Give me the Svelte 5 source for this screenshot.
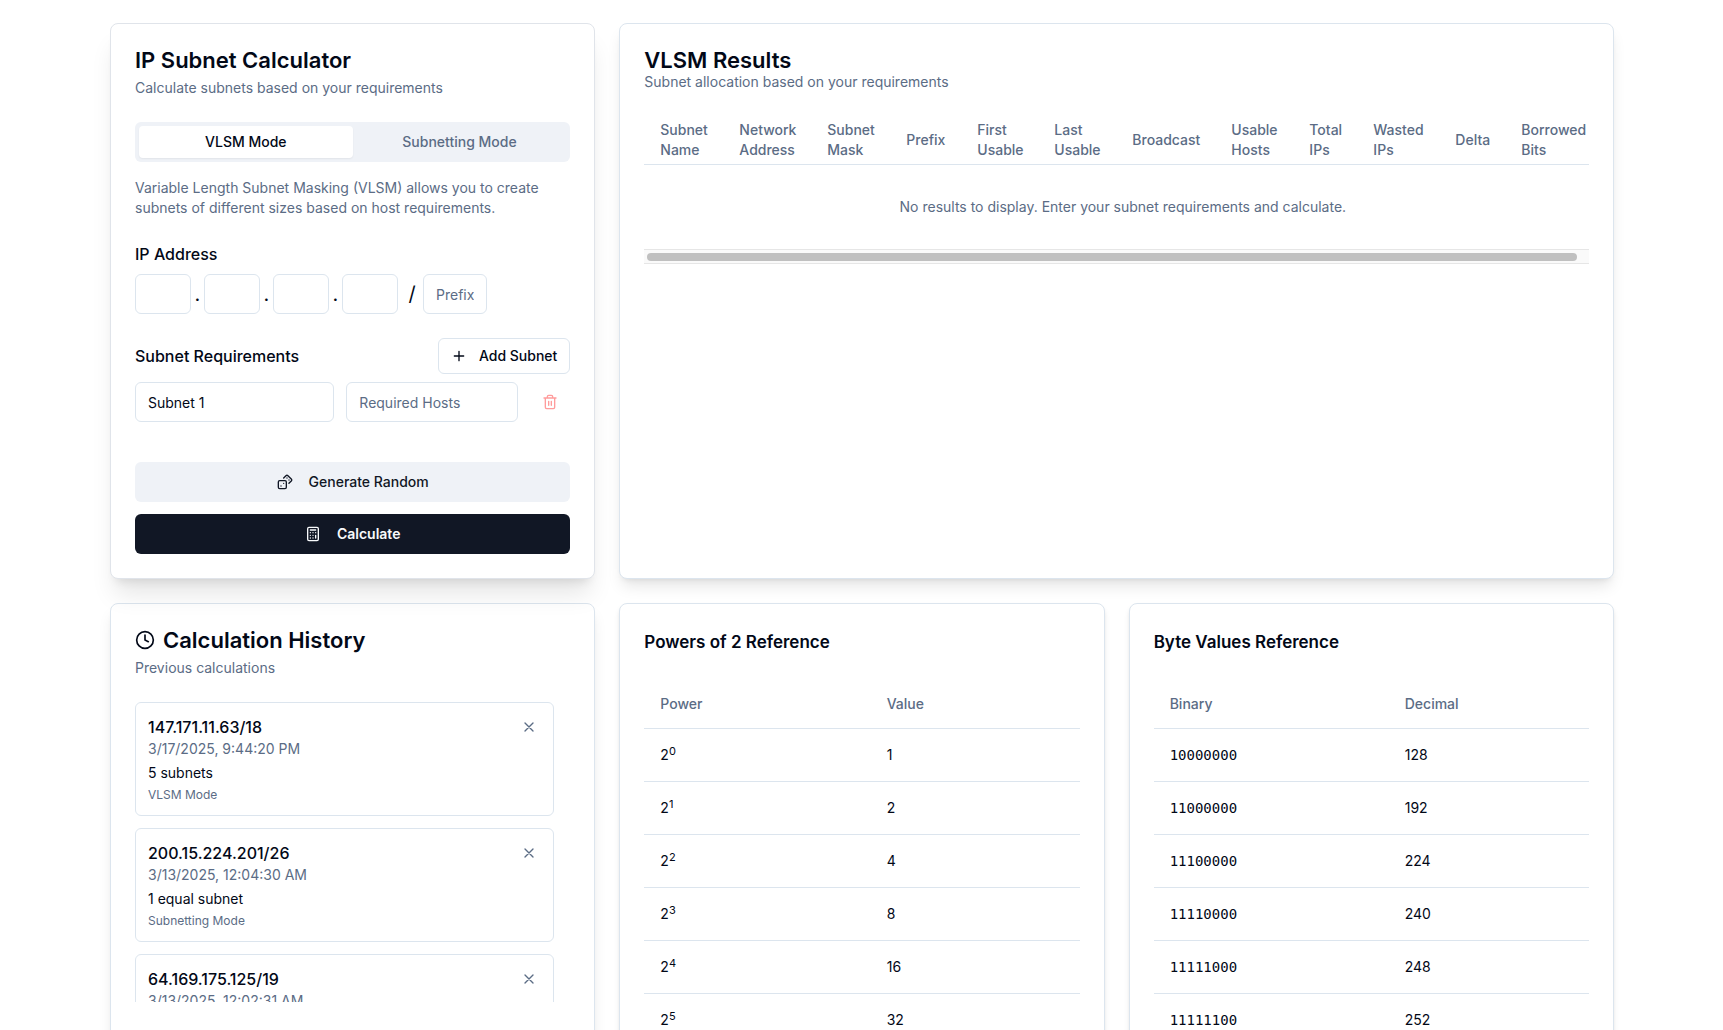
<script>
  let mode = $state('vlsm');
  let octets = $state(['', '', '', '']);
  let prefix = $state('');
  let subnets = $state([{ id: 1, name: 'Subnet 1', hosts: '' }]);
  let history = $state([
    { id: 1, ip: '147.171.11.63/18', date: '3/17/2025, 9:44:20 PM', count: '5 subnets', mode: 'VLSM Mode' },
    { id: 2, ip: '200.15.224.201/26', date: '3/13/2025, 12:04:30 AM', count: '1 equal subnet', mode: 'Subnetting Mode' },
    { id: 3, ip: '64.169.175.125/19', date: '3/13/2025, 12:02:31 AM', count: '4 subnets', mode: 'VLSM Mode' }
  ]);

  const columns = [
    ['Subnet Name', 79], ['Network Address', 88], ['Subnet Mask', 79], ['Prefix', 71],
    ['First Usable', 77], ['Last Usable', 78], ['Broadcast', 99], ['Usable Hosts', 78],
    ['Total IPs', 64], ['Wasted IPs', 82], ['Delta', 66], ['Borrowed Bits', 96]
  ];
  const powers = Array.from({ length: 9 }, (_, i) => [i, 2 ** i]);
  const bytes = [128, 192, 224, 240, 248, 252, 254, 255];

  function addSubnet() {
    const id = subnets.length + 1;
    subnets.push({ id, name: `Subnet ${id}`, hosts: '' });
  }
  function removeSubnet(id) {
    subnets = subnets.filter((s) => s.id !== id);
  }
  function removeEntry(id) {
    history = history.filter((h) => h.id !== id);
  }
  function randomize() {
    octets = octets.map(() => String(Math.floor(Math.random() * 254) + 1));
    prefix = String(Math.floor(Math.random() * 16) + 8);
  }
</script>

<main class="page">
  <section class="card calculator">
    <header>
      <h1>IP Subnet Calculator</h1>
      <p class="sub">Calculate subnets based on your requirements</p>
    </header>

    <div class="tabs" role="tablist">
      <button type="button" role="tab" aria-selected={mode === 'vlsm'} class:active={mode === 'vlsm'} onclick={() => (mode = 'vlsm')}>VLSM Mode</button>
      <button type="button" role="tab" aria-selected={mode === 'equal'} class:active={mode === 'equal'} onclick={() => (mode = 'equal')}>Subnetting Mode</button>
    </div>
    <p class="explain">Variable Length Subnet Masking (VLSM) allows you to create subnets of different sizes based on host requirements.</p>

    <label class="label" for="octet-0">IP Address</label>
    <div class="address">
      {#each octets as _, i}
        {#if i > 0}<span class="dot">.</span>{/if}
        <input class="octet" id="octet-{i}" aria-label="Octet {i + 1}" bind:value={octets[i]} />
      {/each}
      <span class="slash">/</span>
      <input class="prefix" aria-label="Prefix" placeholder="Prefix" bind:value={prefix} />
    </div>

    <div class="requirements">
      <h2 class="label">Subnet Requirements</h2>
      <button type="button" class="outline" onclick={addSubnet}>
        <svg viewBox="0 0 24 24"><path d="M5 12h14M12 5v14" /></svg>
        Add Subnet
      </button>
    </div>
    <div class="subnets">
      {#each subnets as subnet (subnet.id)}
        <div class="subnet">
          <input aria-label="Subnet name" bind:value={subnet.name} />
          <input aria-label="Required hosts" placeholder="Required Hosts" bind:value={subnet.hosts} />
          <button type="button" class="trash" aria-label="Remove subnet" disabled={subnets.length === 1} onclick={() => removeSubnet(subnet.id)}>
            <svg viewBox="0 0 24 24">
              <path d="M3 6h18M19 6v14c0 1-1 2-2 2H7c-1 0-2-1-2-2V6M8 6V4c0-1 1-2 2-2h4c1 0 2 1 2 2v2M10 11v6M14 11v6" />
            </svg>
          </button>
        </div>
      {/each}
    </div>

    <div class="actions">
      <button type="button" class="secondary" onclick={randomize}>
        <svg viewBox="0 0 24 24">
          <rect width="12" height="12" x="2" y="10" rx="2" ry="2" />
          <path d="m17.92 14 3.5-3.5a2.24 2.24 0 0 0 0-3l-5-4.92a2.24 2.24 0 0 0-3 0L10 6M6 18h.01M10 14h.01M15 6h.01M18 9h.01" />
        </svg>
        Generate Random
      </button>
      <button type="button" class="primary">
        <svg viewBox="0 0 24 24">
          <rect width="16" height="20" x="4" y="2" rx="2" />
          <path d="M8 6h8M16 14v4M16 10h.01M12 10h.01M8 10h.01M12 14h.01M8 14h.01M12 18h.01M8 18h.01" />
        </svg>
        Calculate
      </button>
    </div>
  </section>

  <section class="card raised results">
    <header class="tight">
      <h1>VLSM Results</h1>
      <p class="sub">Subnet allocation based on your requirements</p>
    </header>
    <div class="scroll-x">
      <table class="allocation">
        <colgroup>
          {#each columns as [, width]}<col style="width: {width}px" />{/each}
        </colgroup>
        <thead>
          <tr>{#each columns as [name]}<th scope="col">{name}</th>{/each}</tr>
        </thead>
        <tbody>
          <tr><td class="empty" colspan={columns.length}>No results to display. Enter your subnet requirements and calculate.</td></tr>
        </tbody>
      </table>
    </div>
    <div class="track" aria-hidden="true"><div class="thumb"></div></div>
  </section>

  <section class="card raised">
    <header>
      <h1 class="with-icon">
        <svg viewBox="0 0 24 24"><circle cx="12" cy="12" r="10" /><path d="M12 6v6l4 2" /></svg>
        Calculation History
      </h1>
      <p class="sub">Previous calculations</p>
    </header>
    <div class="history">
      {#each history as h (h.id)}
        <article class="entry">
          <div>
            <h3>{h.ip}</h3>
            <p class="sub">{h.date}</p>
            <p class="count">{h.count}</p>
            <p class="kind">{h.mode}</p>
          </div>
          <button type="button" class="close" aria-label="Delete {h.ip}" onclick={() => removeEntry(h.id)}>
            <svg viewBox="0 0 24 24"><path d="M18 6 6 18M6 6l12 12" /></svg>
          </button>
        </article>
      {/each}
    </div>
  </section>

  <section class="card mid">
    <h2 class="ref-title">Powers of 2 Reference</h2>
    <table class="ref powers">
      <thead><tr><th scope="col">Power</th><th scope="col">Value</th></tr></thead>
      <tbody>
        {#each powers as [p, v]}
          <tr><td>2<sup>{p}</sup></td><td>{v}</td></tr>
        {/each}
      </tbody>
    </table>
  </section>

  <section class="card mid">
    <h2 class="ref-title">Byte Values Reference</h2>
    <table class="ref bytes">
      <thead><tr><th scope="col">Binary</th><th scope="col">Decimal</th></tr></thead>
      <tbody>
        {#each bytes as b}
          <tr><td class="mono">{b.toString(2)}</td><td>{b}</td></tr>
        {/each}
      </tbody>
    </table>
  </section>
</main>

<style>
  :global(body) { margin: 0; background: #fff; }
  :global(*) { box-sizing: border-box; }

  .page {
    --ink: #020817;
    --muted: #5b6c85;
    --line: #dce5ee;
    --soft: #eff2f7;
    display: grid;
    grid-template-columns: repeat(3, minmax(0, 1fr));
    gap: 24px;
    max-width: 1537px;
    margin: 0 auto;
    padding: 23px 16px 23px 17px;
    font: 400 14px/20px Inter, "Liberation Sans", sans-serif;
    color: var(--ink);
  }
  h1, h2, h3, p { margin: 0; }
  button, input { font: inherit; color: inherit; }
  button { border: 0; background: none; padding: 0; cursor: pointer; font-weight: 500; }
  svg {
    width: 16px;
    height: 16px;
    flex: none;
    fill: none;
    stroke: currentColor;
    stroke-width: 2;
    stroke-linecap: round;
    stroke-linejoin: round;
  }

  .card {
    background: #fff;
    border: 1px solid var(--line);
    border-radius: 8px;
    padding: 24px;
    min-width: 0;
  }
  .raised { box-shadow: 0 10px 15px -3px rgb(0 0 0 / 0.1), 0 4px 6px -4px rgb(0 0 0 / 0.1); }
  .mid { box-shadow: 0 4px 6px -1px rgb(0 0 0 / 0.1), 0 2px 4px -2px rgb(0 0 0 / 0.1); }
  .calculator {
    position: relative;
    z-index: 1;
    border-color: #e0e4ea;
    box-shadow: 0 20px 25px -5px rgb(0 0 0 / 0.1), 0 8px 10px -6px rgb(0 0 0 / 0.1);
  }

  header { display: flex; flex-direction: column; gap: 6px; margin-bottom: 24px; }
  header.tight { gap: 0; }
  h1 { font-size: 22px; line-height: 24px; font-weight: 600; }
  .sub { color: var(--muted); }
  .with-icon { display: flex; align-items: center; gap: 8px; }
  .with-icon svg { width: 20px; height: 20px; }

  .tabs {
    display: grid;
    grid-template-columns: 1fr 1fr;
    padding: 4px;
    height: 40px;
    border-radius: 6px;
    background: var(--soft);
  }
  .tabs button { border-radius: 4px; color: var(--muted); }
  .tabs .active { background: #fff; color: var(--ink); box-shadow: 0 1px 2px rgb(0 0 0 / 0.06); }
  .explain { margin: 16px 0 24px; color: var(--muted); }

  .label { display: block; font-size: 16px; line-height: 24px; font-weight: 500; }
  input {
    width: 100%;
    min-width: 0;
    height: 40px;
    padding: 0 12px;
    border: 1px solid var(--line);
    border-radius: 6px;
    background: #fff;
  }
  input::placeholder { color: var(--muted); opacity: 1; }
  .address { display: flex; align-items: center; margin-top: 8px; font-size: 20px; }
  .address input { font-size: 14px; }
  .address .octet { width: 56px; }
  .address .prefix { width: 64px; }
  .dot { width: 13px; text-align: center; }
  .slash { width: 25px; padding-left: 3px; text-align: center; }

  .requirements { display: flex; align-items: center; justify-content: space-between; margin-top: 24px; }
  .outline {
    display: flex;
    align-items: center;
    gap: 12px;
    height: 36px;
    padding: 0 12px;
    border: 1px solid var(--line);
    border-radius: 6px;
  }
  .subnets { display: grid; gap: 8px; margin-top: 8px; }
  .subnet { display: grid; grid-template-columns: 1fr 172px 40px; gap: 12px; }
  .trash { display: flex; align-items: center; justify-content: center; color: #ff3b3b; }
  .trash:disabled { opacity: 0.5; }

  .actions { display: grid; gap: 12px; margin-top: 40px; }
  .actions button {
    display: flex;
    align-items: center;
    justify-content: center;
    gap: 16px;
    height: 40px;
    border-radius: 6px;
  }
  .actions .secondary { background: var(--soft); color: #111725; }
  .actions .primary { background: #111725; color: #f8fafc; font-weight: 600; }

  .results { grid-column: span 2; }
  .scroll-x { overflow-x: auto; scrollbar-width: none; }
  .track {
    height: 15px;
    padding: 3px;
    background: #fafafa;
    border: solid #e6e6e6;
    border-width: 1px 0;
  }
  .thumb { width: 99%; height: 8px; border-radius: 4px; background: #c0c0c0; }

  table { width: 100%; border-collapse: collapse; }
  .allocation { width: 957px; min-width: 100%; table-layout: fixed; }
  th { height: 48px; padding: 0 8px 0 16px; text-align: left; font-weight: 500; color: var(--muted); }
  thead tr { border-bottom: 1px solid var(--line); }
  td { padding: 16px; }
  .empty { padding: 32px 16px; text-align: center; color: var(--muted); }

  .history { display: grid; gap: 12px; height: 300px; overflow: hidden; padding-right: 16px; align-content: start; }
  .entry {
    display: flex;
    justify-content: space-between;
    align-items: flex-start;
    padding: 12px;
    border: 1px solid var(--line);
    border-radius: 6px;
  }
  h3 { font-size: 16px; line-height: 24px; font-weight: 500; }
  .count { margin: 4px 0; }
  .kind { font-size: 12px; line-height: 16px; color: var(--muted); }
  .close { display: flex; align-items: center; justify-content: center; width: 24px; height: 24px; color: var(--muted); }

  .ref-title { margin-bottom: 24px; font-size: 17px; line-height: 28px; font-weight: 600; }
  .ref { table-layout: fixed; }
  .powers th:first-child { width: 52%; }
  .bytes th:first-child { width: 54%; }
  .ref tbody tr { border-bottom: 1px solid var(--line); }
  .mono { font-family: "DejaVu Sans Mono", monospace; }
  sup { position: relative; top: -5px; vertical-align: baseline; font-size: 11px; line-height: 0; }
</style>
